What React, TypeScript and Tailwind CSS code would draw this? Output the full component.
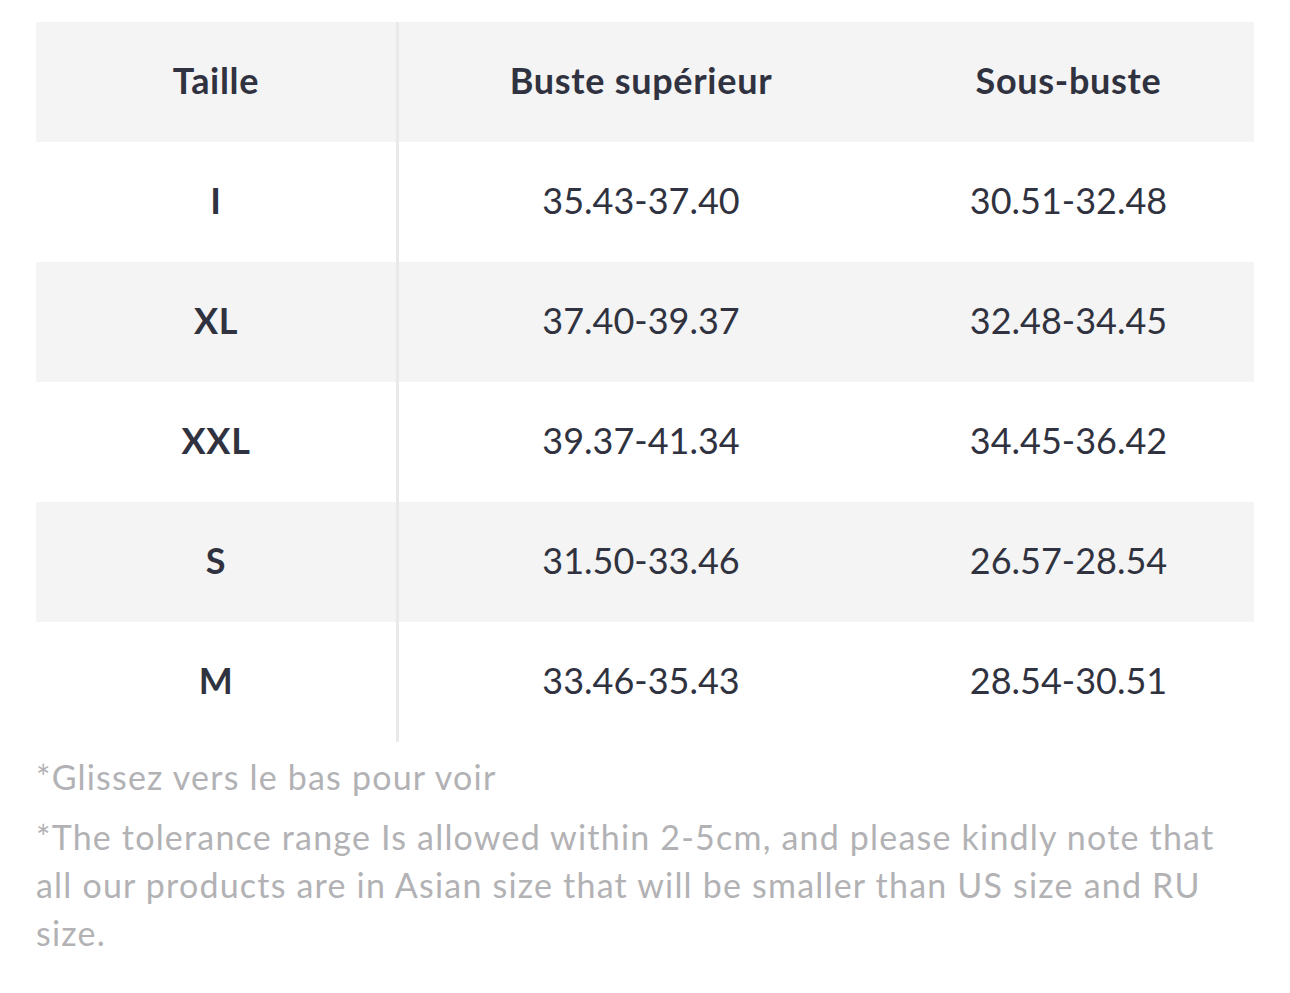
const headers = ['Taille', 'Buste supérieur', 'Sous-buste']

const rows = [
  ['I', '35.43-37.40', '30.51-32.48'],
  ['XL', '37.40-39.37', '32.48-34.45'],
  ['XXL', '39.37-41.34', '34.45-36.42'],
  ['S', '31.50-33.46', '26.57-28.54'],
  ['M', '33.46-35.43', '28.54-30.51'],
]

const App = () => {
  return (
    <div
      className="w-[1290px] h-[993px] bg-white pt-[22px] pl-[36px]"
      style={{ fontFamily: 'Lato, "Open Sans", sans-serif' }}
    >
      {/* Table */}
      <div className="w-[1218px] text-[#30333f]">
        <div className="flex h-[120px] bg-[#f4f4f5]">
          <div className="w-[363px] border-r-[3px] border-[#e9e9ea] flex items-center justify-center pb-[4px] text-[36px] font-bold tracking-[0.7px]">
            {headers[0]}
          </div>
          <div className="w-[484px] flex items-center justify-center pb-[4px] text-[36px] font-bold tracking-[0.7px]">
            {headers[1]}
          </div>
          <div className="w-[371px] flex items-center justify-center pb-[4px] text-[36px] font-bold tracking-[0.7px]">
            {headers[2]}
          </div>
        </div>

        {rows.map((r, i) => (
          <div
            key={r[0]}
            className={
              'flex h-[120px] ' + (i % 2 === 1 ? 'bg-[#f4f4f5]' : 'bg-white')
            }
          >
            <div className="w-[363px] border-r-[3px] border-[#e9e9ea] flex items-center justify-center pb-[4px] text-[36px] font-bold tracking-[0.7px]">
              {r[0]}
            </div>
            <div className="w-[484px] flex items-center justify-center pb-[4px] text-[36px]">
              {r[1]}
            </div>
            <div className="w-[371px] flex items-center justify-center pb-[4px] text-[36px]">
              {r[2]}
            </div>
          </div>
        ))}
      </div>

      {/* Notes */}
      <div className="w-[1230px] mt-[11px] text-[34px] leading-[48px] tracking-[1.2px] text-[#b2b2b5]">
        <p>*Glissez vers le bas pour voir</p>
        <p className="mt-[12px]">
          *The tolerance range Is allowed within 2-5cm, and please kindly note that
          <br />
          all our products are in Asian size that will be smaller than US size and RU
          <br />
          size.
        </p>
      </div>
    </div>
  )
}

export default App
